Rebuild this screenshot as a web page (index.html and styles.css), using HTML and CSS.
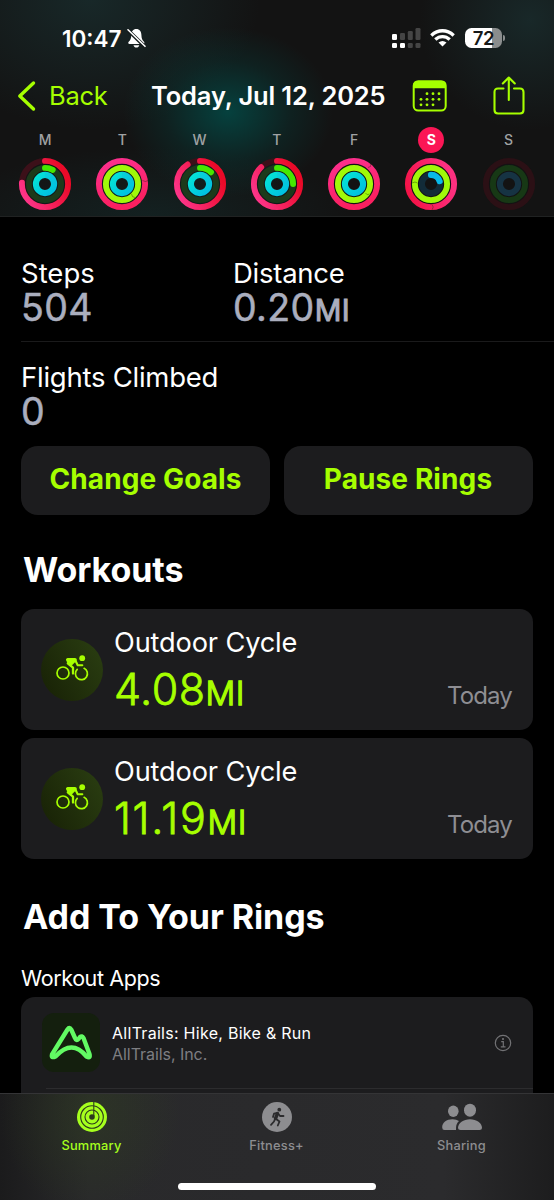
FILE: index.html
```
<!DOCTYPE html>
<html lang="en">
<head>
<meta charset="utf-8">
<title>Fitness</title>
<link rel="stylesheet" href="styles.css">
</head>
<body>
<svg class="defs" width="0" height="0" aria-hidden="true">
  <defs>
    <linearGradient id="move" x1="0.75" y1="0.9" x2="0.3" y2="0"><stop offset="0" stop-color="#ea0a28"/><stop offset="1" stop-color="#fd3488"/></linearGradient>
    <linearGradient id="moveFull" x1="1" y1="0" x2="0" y2="0.3"><stop offset="0" stop-color="#fd3090"/><stop offset="1" stop-color="#fa2060"/></linearGradient>
    <linearGradient id="moveOver" x1="0" y1="1" x2="1" y2="0.6"><stop offset="0" stop-color="#f30f40"/><stop offset="1" stop-color="#fd3080"/></linearGradient>
    <linearGradient id="stand" x1="1" y1="1" x2="0" y2="0"><stop offset="0" stop-color="#00bee2"/><stop offset="1" stop-color="#04e4d6"/></linearGradient>
    <g id="cyclist" fill="none" stroke="#a6ff00" stroke-linecap="round" stroke-linejoin="round">
      <circle cx="7" cy="18" r="6" stroke-width="1.7"/>
      <path d="M28.1 13.3A6 6 0 1 1 21.2 14.4" stroke-width="1.7"/>
      <path d="M11.800 4.800H19L14.500 9.300Z" stroke-width="3.600" fill="#a6ff00"/>
      <path d="M11.800 8.300L17 12.700V18.500" stroke-width="2.300"/>
      <path d="M19.300 5.300L21.700 10.200H26.300" stroke-width="2.100"/>
      <circle cx="26.200" cy="3.200" r="2.900" fill="#a6ff00" stroke="none"/>
    </g>
  </defs>
</svg>

<header class="top">
  <div class="status">
    <span class="time">10:47</span>
    <svg class="bell" width="19" height="21" viewBox="0 0 19 21"><path d="M9.300 1C6 1 4.400 3.400 4.300 7c-.1 3.500-.8 5-2.600 6.700-.9.900-.4 2.200.8 2.200h13.700c1.200 0 1.600-1.300.8-2.200-1.800-1.700-2.500-3.200-2.600-6.700C14.300 3.400 12.600 1 9.300 1zM6.500 17.200c.4 1.400 1.500 2.300 2.900 2.300s2.500-.9 2.900-2.300z" fill="#fff"/><path d="M1.300 2.500L17.500 18.200" stroke="#141a1a" stroke-width="3.600"/><path d="M1 1.800L18 18.300" stroke="#fff" stroke-width="1.600" stroke-linecap="round"/></svg>
    <svg class="signal" width="29" height="20" viewBox="0 0 29 20"><g fill="#fff"><rect y="6" width="5" height="6" rx="1.300"/><rect y="15" width="5" height="5" rx="1.300"/><rect x="8" y="15" width="5" height="5" rx="1.300"/></g><g fill="#454545"><rect x="8" y="5" width="5" height="7" rx="1.300"/><rect x="15.800" y="3" width="5" height="9" rx="1.300"/><rect x="23.500" y="0" width="5" height="12" rx="1.300"/><rect x="15.800" y="15" width="5" height="5" rx="1.300"/><rect x="23.500" y="15" width="5" height="5" rx="1.300"/></g></svg>
    <svg class="wifi" width="25" height="18" viewBox="0 0 25 18"><g fill="none" stroke="#fff" stroke-width="3.400"><path d="M1.300 6.400Q6.500 1.800 12.500 1.800T23.700 6.400"/><path d="M5.300 10.500Q8.500 7.600 12.500 7.600T19.700 10.500"/></g><path d="M8.500 13.600Q12.500 10.600 16.500 13.600L12.500 17.500Z" fill="#fff"/></svg>
    <div class="battery"><span class="level">72</span><i class="cap"></i></div>
  </div>
  <nav class="nav">
    <svg class="chev" width="19" height="32" viewBox="0 0 19 32"><path d="M16.500 3L2.800 16L16.500 29" fill="none" stroke="#a6ff00" stroke-width="3.400" stroke-linecap="round" stroke-linejoin="round"/></svg>
    <span class="back">Back</span>
    <span class="date">Today, Jul 12, 2025</span>
    <svg class="cal" width="35" height="32" viewBox="0 0 35 32"><rect x="1.700" y="1.200" width="32" height="29.300" rx="4.500" fill="none" stroke="#a6ff00" stroke-width="2"/><path d="M1.500 8.300V5Q1.500 1 5.500 1H30Q34 1 34 5V8.300Z" fill="#a6ff00"/><g fill="#a6ff00"><circle cx="15" cy="13.700" r="1.400"/><circle cx="21" cy="13.700" r="1.400"/><circle cx="27" cy="13.700" r="1.400"/><circle cx="9" cy="19.300" r="1.400"/><circle cx="15" cy="19.300" r="1.400"/><circle cx="21" cy="19.300" r="1.400"/><circle cx="27" cy="19.300" r="1.400"/><circle cx="9" cy="24.800" r="1.400"/><circle cx="15" cy="24.800" r="1.400"/><circle cx="21" cy="24.800" r="1.400"/></g></svg>
    <svg class="share" width="32" height="39" viewBox="0 0 32 39"><g fill="none" stroke="#a6ff00" stroke-width="2.100" stroke-linecap="round" stroke-linejoin="round"><path d="M10.500 12.500H5Q1.500 12.500 1.500 16V34Q1.500 37.500 5 37.500H27Q30.500 37.500 30.500 34V16Q30.500 12.500 27 12.500H21"/><path d="M15.800 24V1.500M9.800 7.500L15.800 1.500L21.800 7.500"/></g></svg>
  </nav>
  <div class="week">
    <div class="day"><b>M</b><svg class="rings" viewBox="-27 -27 54 54"><circle class="m t" r="23.100"/><circle class="m" r="23.100" pathLength="100" stroke-dasharray="76 100"/><circle class="e t" r="16.100"/><circle class="e g" r="16.100" pathLength="100" stroke-dasharray="8 100"/><circle class="s" r="9.100"/><path class="tip" d="M0-9.100A9.100 9.100 0 0 1 9.100 0"/></svg></div>
    <div class="day"><b>T</b><svg class="rings" viewBox="-27 -27 54 54"><circle class="m full" r="23.100"/><path class="seam" d="M20.500-3.500Q23.500-1.500 26-3.500"/><circle class="e" r="16.100"/><path class="seam" d="M9.500 10Q10 13.500 13 13.500"/><circle class="s" r="9.100"/><path class="tip" d="M0-9.100A9.100 9.100 0 0 1 9.100 0"/></svg></div>
    <div class="day"><b>W</b><svg class="rings" viewBox="-27 -27 54 54"><circle class="m t" r="23.100"/><circle class="m" r="23.100" pathLength="100" stroke-dasharray="91 100"/><circle class="e t" r="16.100"/><circle class="e g" r="16.100" pathLength="100" stroke-dasharray="12 100"/><circle class="s" r="9.100"/><path class="tip" d="M0-9.100A9.100 9.100 0 0 1 9.100 0"/></svg></div>
    <div class="day"><b>T</b><svg class="rings" viewBox="-27 -27 54 54"><circle class="m t" r="23.100"/><circle class="m" r="23.100" pathLength="100" stroke-dasharray="88 100"/><circle class="e t" r="16.100"/><circle class="e g" r="16.100" pathLength="100" stroke-dasharray="25 100"/><circle class="s" r="9.100"/><path class="tip" d="M0-9.100A9.100 9.100 0 0 1 9.100 0"/></svg></div>
    <div class="day"><b>F</b><svg class="rings" viewBox="-27 -27 54 54"><circle class="m full" r="23.100"/><path class="seam" d="M14-16.500Q17.500-16.500 17-20.500"/><circle class="e" r="16.100"/><path class="seam" d="M11.500 9Q13 12 15.500 10"/><circle class="s" r="9.100"/></svg></div>
    <div class="day today"><b>S</b><svg class="rings" viewBox="-27 -27 54 54"><circle class="m over" r="23.100"/><path class="seam" d="M1 20.500Q3.500 23 1 25.800"/><circle class="e" r="16.100"/><path class="seam" d="M-18.800-1Q-16-3-13.500-1"/><circle class="s t" r="9.100"/><circle class="s b" r="9.100" pathLength="100" stroke-dasharray="20 100"/></svg></div>
    <div class="day future"><b>S</b><svg class="rings" viewBox="-27 -27 54 54"><circle class="m t" r="23.100"/><circle class="e t" r="16.100"/><circle class="s t" r="9.100"/></svg></div>
  </div>
</header>

<main>
  <section class="stats">
    <div class="row split">
      <div class="stat"><span class="label steps">Steps</span><span class="value">504</span></div>
      <div class="stat"><span class="label">Distance</span><span class="value">0.20<small>MI</small></span></div>
    </div>
    <div class="row">
      <div class="stat"><span class="label">Flights Climbed</span><span class="value">0</span></div>
    </div>
  </section>

  <div class="actions">
    <button class="btn">Change Goals</button>
    <button class="btn">Pause Rings</button>
  </div>

  <h2 class="h-workouts">Workouts</h2>
  <div class="workouts">
    <article class="card">
      <div class="badge"><svg width="34" height="26" viewBox="0 0 34 26"><use href="#cyclist"/></svg></div>
      <div class="info"><span class="kind">Outdoor Cycle</span><span class="dist">4.08<small>MI</small></span></div>
      <span class="when">Today</span>
    </article>
    <article class="card">
      <div class="badge"><svg width="34" height="26" viewBox="0 0 34 26"><use href="#cyclist"/></svg></div>
      <div class="info"><span class="kind">Outdoor Cycle</span><span class="dist eleven">11.19<small>MI</small></span></div>
      <span class="when">Today</span>
    </article>
  </div>

  <h2 class="h-add">Add To Your Rings</h2>
  <h3>Workout Apps</h3>
  <div class="apps">
    <div class="app">
      <div class="logo"><svg width="46" height="38" viewBox="0 0 46 38"><path d="M4 30.500L19.500 5.500Q21.500 2.500 23.200 5.500L27 14Q28.200 17.300 30.500 15L32 13Q34 11.300 35.500 14L41.300 29.500Q43 35 38.500 32.500Q24 14.500 7.500 32.500Q3 34.500 4 30.500Z" fill="none" stroke="#62fa63" stroke-width="4.400" stroke-linejoin="round"/></svg></div>
      <div class="appinfo"><span class="name">AllTrails: Hike, Bike &amp; Run</span><span class="maker">AllTrails, Inc.</span></div>
      <svg class="i" width="18" height="18" viewBox="0 0 18 18"><circle cx="9" cy="9" r="7.700" fill="none" stroke="#727275" stroke-width="1.200"/><circle cx="9" cy="5" r="1.100" fill="#727275"/><path d="M7.200 7.700H9.300V12.800M6.800 12.900H11.500" fill="none" stroke="#727275" stroke-width="1.200"/></svg>
    </div>
  </div>
</main>

<footer class="tabs">
  <div class="tab on"><svg width="32" height="32" viewBox="0 0 32 32"><circle cx="16" cy="16" r="15" fill="#a6ff1e"/><g fill="none" stroke="#2c3a1d" stroke-width="1.100"><circle cx="16" cy="16" r="11.300"/><circle cx="16" cy="16" r="7"/><path d="M17.800 1V15"/></g><circle cx="16" cy="16" r="2.800" fill="#2c3a1d"/></svg><span>Summary</span></div>
  <div class="tab"><svg width="32" height="32" viewBox="0 0 32 32"><circle cx="16" cy="16" r="15" fill="#8d8d90"/><g fill="none" stroke="#2b2b2d" stroke-linecap="round" stroke-linejoin="round"><circle cx="18.300" cy="8.700" r="1.900" fill="#2b2b2d" stroke="none"/><path d="M16.500 12.500L14.500 17.500" stroke-width="3.400"/><path d="M12 16L13 12.700L16.500 11.800L19 15H22.500M14.700 17.700L18.500 20.500L16.800 24.500M14 18L13 20.500L10 23.800" stroke-width="1.800"/></g></svg><span>Fitness+</span></div>
  <div class="tab"><svg width="42" height="32" viewBox="0 0 42 32"><g fill="#8d8d90"><ellipse cx="12.300" cy="10.200" rx="5.300" ry="5.700"/><path d="M1.200 26.500C1 21.500 5.500 18.200 11.500 18.200Q15.500 18.200 18 20Q14.800 22.500 15 29H3.500Q1.200 29 1.200 26.500Z"/><ellipse cx="29" cy="9.200" rx="6" ry="6.500"/><path d="M17 27C17 22 22.500 18.200 29 18.200S41 22 41 27Q41 29 38.500 29H19.500Q17 29 17 27Z"/></g></svg><span>Sharing</span></div>
  <i class="home"></i>
</footer>
</body>
</html>
```
FILE: styles.css
```
* { box-sizing: border-box; }
body {
  margin: 0;
  width: 554px;
  height: 1200px;
  overflow: hidden;
  display: flex;
  flex-direction: column;
  background: #000;
  color: #fff;
  font-family: Inter, "Liberation Sans", sans-serif;
  white-space: nowrap;
}
svg { display: block; flex: none; }
.defs { position: absolute; }
span { display: block; }

.top {
  height: 217px;
  flex: none;
  border-bottom: 1px solid #202222;
  background:
    radial-gradient(ellipse 105px 85px at 228px 112px, rgba(0, 83, 79, .72), rgba(0, 83, 79, .22) 60%, transparent),
    radial-gradient(ellipse 170px 130px at 90px 0, rgba(28, 57, 58, .55), transparent),
    radial-gradient(ellipse 110px 110px at 530px 20px, rgba(28, 54, 55, .6), transparent),
    radial-gradient(ellipse 200px 70px at 150px 217px, rgba(20, 50, 50, .45), transparent),
    #131313;
}
.status { height: 62px; padding: 14px 49px 0 62px; display: flex; align-items: center; }
.time { width: 65px; font-size: 22.500px; font-weight: 600; letter-spacing: 0; }
.bell { margin-top: 1px; }
.signal { margin-left: auto; }
.wifi { margin-left: 9px; }
.battery { display: flex; align-items: center; margin-left: 10px; gap: 1px; }
.level {
  width: 37px; height: 20px; border-radius: 6.500px;
  background: linear-gradient(90deg, #fff 72%, #8a8d8d 72%);
  color: #161818; font-size: 18.500px; font-weight: 600; line-height: 20px; text-align: center; letter-spacing: -.4px;
}
.cap { width: 2px; height: 6px; border-radius: 0 2px 2px 0; background: #8a8d8d; }

.nav { height: 68px; padding-left: 17px; display: flex; align-items: center; }
.back { width: 88px; margin-left: 13px; color: #a6ff00; font-size: 25.500px; letter-spacing: -.3px; }
.date { width: 247px; margin-left: 14px; font-size: 25.500px; font-weight: 600; letter-spacing: -.15px; }
.nav .back, .nav .date { padding-bottom: 2px; }
.cal { margin-left: 14px; }
.share { margin-left: 46px; margin-top: -2px; }

.week { display: grid; grid-template-columns: repeat(7, 77.250px); padding-left: 6.500px; margin-top: -3px; }
.day { display: flex; flex-direction: column; align-items: center; }
.day b { width: 26px; height: 26px; line-height: 26px; border-radius: 50%; text-align: center; font-size: 14px; font-weight: 500; color: #a0a2a3; }
.today b { background: #fb1655; color: #fff; font-weight: 700; }
.rings { width: 54px; height: 54px; margin-top: 4px; fill: none; }
.rings circle { transform: rotate(-90deg); stroke-linecap: round; }
.m { stroke: url(#move); stroke-width: 5.900; }
.m.full { stroke: url(#moveFull); }
.rings .m.over { stroke: url(#moveOver); transform: none; }
.m.t { stroke: #3c1019; }
.e { stroke: #a0f909; stroke-width: 5.900; }
.e.t { stroke: #1c3a1b; }
.e.g { stroke: #46e800; }
.s { stroke: url(#stand); stroke-width: 6.100; }
.rings .s { transform: none; }
.rings .s.b { stroke: #08b9e9; transform: rotate(-90deg); }
.s.t { stroke: #122b38; }
.tip { stroke: #12b8dc; stroke-width: 6.100; opacity: .3; }
.seam { stroke: #26320e; stroke-width: .8; opacity: .55; }
.future .m.t { stroke: #2b1015; }
.future .e.t { stroke: #173815; }
.future .s.t { stroke: #163343; }

main { flex: 1; min-height: 0; overflow: hidden; }
.stats { padding-left: 21px; }
.row { height: 105px; padding-top: 19px; }
.split { height: 125px; padding-top: 40px; display: grid; grid-template-columns: 212px auto; border-bottom: 1px solid #1a1a1b; }
.label { height: 33px; line-height: 33px; font-size: 27.500px; letter-spacing: -.25px; }
.steps { letter-spacing: 0; }
.value { height: 35px; line-height: 35px; color: #aaaebe; font-size: 37.500px; font-weight: 400; letter-spacing: .4px; -webkit-text-stroke: .5px #aaaebe; }
.value small { font-size: 29.500px; letter-spacing: .5px; -webkit-text-stroke: 1px #aaaebe; }

.actions { display: grid; grid-template-columns: 249px 249px; gap: 13.500px; padding: 0 21px; margin-top: -1px; }
.btn { height: 69px; border: 0; border-radius: 17px; background: #1c1c1e; color: #a6ff00; font: 700 28px Inter, sans-serif; padding: 0 0 3px; letter-spacing: .1px; }

h2 { margin: 0; height: 40px; padding-left: 23px; line-height: 40px; font-size: 34px; font-weight: 700; letter-spacing: -.07px; }
.h-workouts { margin-top: 35px; }
.workouts { margin-top: 19px; padding: 0 21px; display: grid; gap: 8px; }
.card { height: 121px; display: flex; border-radius: 13px; background: #1c1c1e; padding: 0 21px 0 20px; }
.badge { width: 62px; height: 62px; margin-top: 30px; padding: 0 0 4px 2px; border-radius: 50%; display: flex; align-items: center; justify-content: center; background: linear-gradient(60deg, #172005, #2b3f12); }
.info { margin-left: 11px; padding-top: 16px; }
.kind { height: 36px; line-height: 36px; font-size: 27.200px; letter-spacing: -.15px; }
.dist { height: 56px; line-height: 56px; color: #a6ff00; font-size: 43px; font-weight: 300; letter-spacing: .5px; -webkit-text-stroke: .8px #a6ff00; }
.dist.eleven { letter-spacing: 1.700px; }
.dist small { font-size: 33px; letter-spacing: .5px; -webkit-text-stroke-width: 1.300px; }
.when { margin: 69px 0 0 auto; height: 36px; line-height: 36px; color: #8e8e93; font-size: 24px; letter-spacing: -.85px; }

.h-add { margin-top: 38px; }
h3 { margin: 25px 0 0 21px; height: 32px; line-height: 32px; font-size: 21.500px; font-weight: 400; letter-spacing: -.4px; }
.apps { margin: 3px 21px 0; height: 110px; background: #1c1c1e; border-radius: 14px 14px 0 0; padding-left: 21px; }
.app { height: 92px; display: flex; align-items: center; border-bottom: 1px solid #2c2c2e; margin-left: 4px; padding-right: 21px; }
.logo { width: 58px; height: 59px; margin-left: -4px; border-radius: 12px; background: #141f0e; display: flex; align-items: center; justify-content: center; }
.appinfo { margin-left: 12px; padding-top: 2px; }
.name { height: 22px; line-height: 22px; font-size: 16px; letter-spacing: .28px; }
.maker { height: 21px; line-height: 21px; font-size: 16px; color: #7e7e82; letter-spacing: -.05px; }
.i { margin-left: auto; }

.tabs {
  flex: none;
  height: 107px;
  position: relative;
  display: grid;
  grid-template-columns: repeat(3, 185px);
  padding-top: 7px;
  border-top: 1px solid #343436;
  background:
    radial-gradient(ellipse 90px 100px at 90px 20px, rgba(50, 70, 28, .38), transparent),
    linear-gradient(90deg, #1b1b1c, #29292b 16%, #2b2b2d 80%, #1d1d1e);
}
.tab { display: flex; flex-direction: column; align-items: center; padding-right: 2px; color: #8d8d90; font-size: 12.800px; font-weight: 500; letter-spacing: .25px; }
.tab span { height: 20px; line-height: 20px; margin-top: 3px; }
.tab.on { color: #a6ff1e; }
.home { position: absolute; left: 178px; bottom: 10px; width: 198px; height: 7px; border-radius: 4px; background: #fff; }
```
